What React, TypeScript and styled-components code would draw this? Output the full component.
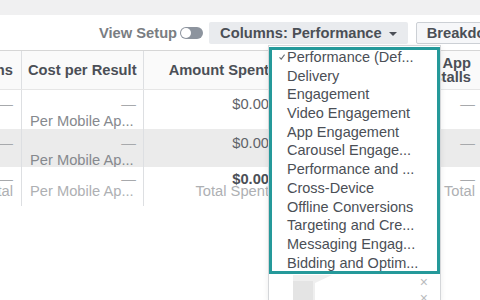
import styled, { createGlobalStyle } from "styled-components";

const GlobalStyle = createGlobalStyle`
  html, body {
    margin: 0;
    padding: 0;
    background: #fff;
  }
  body {
    font-family: "Liberation Sans", Arial, sans-serif;
  }
`;

// 표 컬럼 폭 (첫 컬럼은 잘려 보임)
const COLS = "21px 122px 134px 83px 122px";

const Page = styled.div`
  position: relative;
  width: 480px;
  height: 300px;
  overflow: hidden;
  background: #fff;
`;

const TopBand = styled.div`
  height: 15px;
  background: #f0f0f1;
`;

const Toolbar = styled.div`
  height: 35px;
  display: flex;
  align-items: center;
  padding-left: 99px;
  white-space: nowrap;
  font-size: 14.7px;
  font-weight: bold;
`;

const SetupLabel = styled.span`
  color: #7a7d82;
`;

const Toggle = styled.span`
  margin-left: 3px;
  width: 23px;
  height: 12px;
  box-sizing: border-box;
  border-radius: 6px;
  background: #8d949e;
  display: flex;
  align-items: center;
  padding: 1px;
  flex-shrink: 0;
`;

const Knob = styled.span`
  width: 10px;
  height: 10px;
  border-radius: 50%;
  background: #fff;
`;

const ColumnsButton = styled.div`
  margin-left: 6px;
  height: 22px;
  padding: 0 11px;
  display: flex;
  align-items: center;
  gap: 7px;
  background: #e9ebee;
  border-radius: 2px;
  color: #4b4f56;
  flex-shrink: 0;
`;

const Caret = styled.span`
  width: 0;
  height: 0;
  border-left: 4px solid transparent;
  border-right: 4px solid transparent;
  border-top: 4px solid #4b4f56;
  margin-top: 2px;
`;

const BreakdownButton = styled.div`
  margin-left: 8px;
  height: 22px;
  box-sizing: border-box;
  padding: 0 10px;
  display: flex;
  align-items: center;
  border: 1px solid #ccd0d5;
  border-radius: 2px;
  background: #f6f7f9;
  color: #4b4f56;
  flex-shrink: 0;
`;

const HeaderRow = styled.div`
  display: grid;
  grid-template-columns: ${COLS};
  height: 40px;
  box-sizing: border-box;
  border-top: 1px solid #d6d6d6;
  border-bottom: 1px solid #e6e6e6;
  background: #fafafa;
`;

const HeadCell = styled.div<{ $align?: "left" | "right"; $wrap?: boolean; $pr?: number }>`
  display: flex;
  align-items: center;
  justify-content: ${(p) => (p.$align === "left" ? "flex-start" : "flex-end")};
  text-align: ${(p) => p.$align ?? "right"};
  padding: 0 ${(p) => p.$pr ?? 8}px 0 6px;
  border-left: 1px solid #dddfe2;
  overflow: hidden;
  white-space: ${(p) => (p.$wrap ? "normal" : "nowrap")};
  line-height: 14px;
  font-size: 14.7px;
  font-weight: bold;
  color: #4b4f56;

  &:first-child {
    border-left: none;
    padding-left: 0;
  }
`;

const BodyRow = styled.div<{ $shade?: boolean; $total?: boolean }>`
  display: grid;
  grid-template-columns: ${COLS};
  height: 38.5px;
  background: ${(p) => (p.$shade ? "#ebebeb" : "transparent")};
  line-height: ${(p) => (p.$total ? 12 : 17)}px;
  font-size: 14.7px;
`;

const BodyCell = styled.div<{ $pr?: number }>`
  display: flex;
  flex-direction: column;
  padding: 6px ${(p) => p.$pr ?? 7}px 0 8px;
  border-left: 1px solid #dddfe2;
  overflow: hidden;
  white-space: nowrap;

  &:first-child {
    border-left: none;
    padding-left: 0;
  }
`;

const Dash = styled.span`
  align-self: flex-end;
  color: #a7a9ac;
`;

const Value = styled.span<{ $strong?: boolean }>`
  align-self: flex-end;
  color: ${(p) => (p.$strong ? "#4b4f56" : "#5f6368")};
  font-weight: ${(p) => (p.$strong ? "bold" : "normal")};
`;

const Note = styled.span<{ $faint?: boolean; $right?: boolean }>`
  align-self: ${(p) => (p.$right ? "flex-end" : "flex-start")};
  color: ${(p) => (p.$faint ? "#aeb0b3" : "#86898e")};
`;

const Menu = styled.div`
  position: absolute;
  left: 268px;
  top: 45px;
  width: 173px;
  bottom: 0;
  box-sizing: border-box;
  background: #fff;
  border: 1px solid #d4d6d9;
  border-bottom: none;
  box-shadow: 0 2px 6px rgba(0, 0, 0, 0.08);
`;

const Highlight = styled.div`
  margin-top: 1px;
  height: 227px;
  box-sizing: border-box;
  border: 3px solid #25999a;
`;

const ItemList = styled.ul`
  list-style: none;
  margin: -2px 0 0;
  padding: 0;
`;

const Item = styled.li`
  display: flex;
  height: 18.7px;
  line-height: 18.7px;
  padding-right: 13px;
  font-size: 14.5px;
  color: #4b4f56;
  white-space: nowrap;
  overflow: hidden;
`;

const CheckSlot = styled.span`
  width: 15px;
  flex-shrink: 0;
  box-sizing: border-box;
  padding-right: 2px;
  display: flex;
  align-items: center;
  justify-content: flex-end;
`;

const MenuFooter = styled.div`
  position: relative;
`;

const FooterRow = styled.div`
  height: 16px;
  display: flex;
  align-items: center;
  justify-content: flex-end;
  padding-right: 12px;
  font-size: 14px;
  color: #b9bbbe;
`;

const Pointer = styled.svg`
  position: absolute;
  left: 24px;
  top: 1px;
`;

const menuItems = [
  "Performance (Def...",
  "Delivery",
  "Engagement",
  "Video Engagement",
  "App Engagement",
  "Carousel Engage...",
  "Performance and ...",
  "Cross-Device",
  "Offline Conversions",
  "Targeting and Cre...",
  "Messaging Engag...",
  "Bidding and Optim...",
];

const rows = [{ shade: false }, { shade: true }];

function App() {
  return (
    <Page>
      <GlobalStyle />
      <TopBand />
      <Toolbar>
        <SetupLabel>View Setup</SetupLabel>
        <Toggle>
          <Knob />
        </Toggle>
        <ColumnsButton>
          Columns: Performance
          <Caret />
        </ColumnsButton>
        <BreakdownButton>Breakdown</BreakdownButton>
      </Toolbar>

      <HeaderRow>
        <HeadCell>Impressions</HeadCell>
        <HeadCell $align="left">Cost per Result</HeadCell>
        <HeadCell>Amount Spent</HeadCell>
        <HeadCell>Results</HeadCell>
        <HeadCell $wrap $pr={11}>Mobile App Installs</HeadCell>
      </HeaderRow>

      {rows.map((row, i) => (
        <BodyRow key={i} $shade={row.shade}>
          <BodyCell $pr={8}>
            <Dash>—</Dash>
          </BodyCell>
          <BodyCell>
            <Dash>—</Dash>
            <Note>Per Mobile Ap...</Note>
          </BodyCell>
          <BodyCell $pr={8}>
            <Value>$0.00</Value>
          </BodyCell>
          <BodyCell>
            <Dash>—</Dash>
          </BodyCell>
          <BodyCell>
            <Dash>—</Dash>
          </BodyCell>
        </BodyRow>
      ))}

      <BodyRow $total>
        <BodyCell $pr={8}>
          <Dash>—</Dash>
          <Note $faint $right>Total</Note>
        </BodyCell>
        <BodyCell>
          <Dash>—</Dash>
          <Note $faint>Per Mobile Ap...</Note>
        </BodyCell>
        <BodyCell $pr={8}>
          <Value $strong>$0.00</Value>
          <Note $faint $right>Total Spent</Note>
        </BodyCell>
        <BodyCell>
          <Dash>—</Dash>
          <Note $faint $right>Total</Note>
        </BodyCell>
        <BodyCell>
          <Dash>—</Dash>
          <Note $faint $right>Total</Note>
        </BodyCell>
      </BodyRow>

      <Menu>
        <Highlight>
          <ItemList>
            {menuItems.map((label, index) => (
              <Item key={label}>
                <CheckSlot>
                  {index === 0 && (
                    <svg width="6" height="6" viewBox="0 0 6 6">
                      <path d="M0.5 3.4 L2.2 5.2 L5.6 0.6" fill="none" stroke="#6b6f75" strokeWidth="1.1" />
                    </svg>
                  )}
                </CheckSlot>
                {label}
              </Item>
            ))}
          </ItemList>
        </Highlight>
        <MenuFooter>
          <Pointer width="40" height="26" viewBox="0 0 40 26">
            <path d="M0 0 H39 L22 8 V26 H0 Z" fill="#efefef" />
            <path d="M0 6 H20 V26 H0 Z" fill="#e4e4e4" />
          </Pointer>
          <FooterRow>×</FooterRow>
          <FooterRow>×</FooterRow>
        </MenuFooter>
      </Menu>
    </Page>
  );
}

export default App;
